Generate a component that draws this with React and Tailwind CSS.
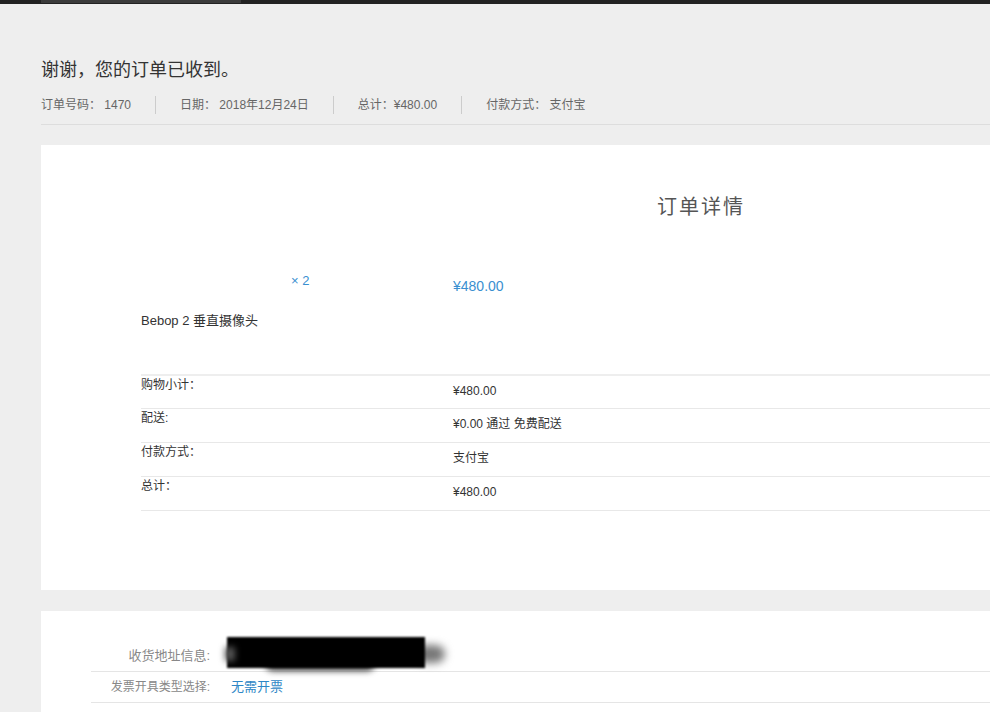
export default function App() {
  const font = { fontFamily: '"Liberation Sans", Arial, "Noto Sans CJK SC", sans-serif' };
  const rows = [
    ["购物小计：", "¥480.00"],
    ["配送:", "¥0.00 通过 免费配送"],
    ["付款方式：", "支付宝"],
    ["总计：", "¥480.00"],
  ];
  return (
    <div className="w-full h-[712px] overflow-hidden bg-[#eeeeee]" style={font}>
      <div className="h-[4px] bg-[#222222] flex">
        <div className="ml-[41px] w-[200px] h-[3px] bg-[#3b3b3b]" />
      </div>
      <div className="w-[1320px] ml-[41px]">
        <h1 className="mt-[54px] text-[18px] leading-[24px] text-[#333333] font-normal">谢谢，您的订单已收到。</h1>
        <div className="mt-[14px] flex items-center text-[12px] leading-[18px] text-[#666666] pb-[10px] border-b border-[#dddddd]">
          <span className="pr-[24px]">订单号码： 1470</span>
          <span className="px-[24px] border-l border-[#cccccc]">日期： 2018年12月24日</span>
          <span className="px-[24px] border-l border-[#cccccc]">总计：¥480.00</span>
          <span className="px-[24px] border-l border-[#cccccc]">付款方式： 支付宝</span>
        </div>

        <div className="mt-[20px] bg-white pt-[48px] pb-[79px]">
          <h2 className="text-center text-[20px] leading-[28px] tracking-[2px] text-[#555555] font-normal">订单详情</h2>
          <div className="ml-[100px] mt-[51px] flex">
            <div className="w-[312px]">
              <div className="pl-[150px] text-[13px] leading-[18px] text-[#3a8fd0]">× 2</div>
              <div className="mt-[22px] text-[13px] leading-[18px] text-[#333333]">Bebop 2 垂直摄像头</div>
            </div>
            <div className="pt-[5px] text-[14px] leading-[18px] text-[#3a8fd0]">¥480.00</div>
          </div>
          <div className="ml-[100px] mt-[44px] border-t-2 border-[#eeeeee]">
            {rows.map(([k, v], i) => (
              <div key={k} className={`flex border-b border-[#e8e8e8] text-[12px] leading-[18px] text-[#333333] ${i === 0 ? "h-[33px]" : "h-[34px]"}`}>
                <div className="w-[312px]">{k}</div>
                <div className="pt-[6px]">{v}</div>
              </div>
            ))}
          </div>
        </div>

        <div className="mt-[21px] bg-white pt-[30px] pl-[50px] h-[200px]">
          <div className="flex items-center h-[31px] border-b border-[#e5e5e5]">
            <div className="w-[120px] pr-[1px] text-right text-[13px] text-[#888888]">收货地址信息:</div>
            <div className="relative ml-[14px] w-[230px] h-[31px]">
              <div className="absolute left-[190px] top-[4px] w-[30px] h-[18px] bg-[#777777] blur-[4px] rounded-full" />
              <div className="absolute left-[40px] top-[14px] w-[110px] h-[16px] bg-[#444444] blur-[3px] rounded-full" />
              <div className="absolute left-[2px] top-[-4px] w-[198px] h-[31px] bg-black blur-[1px]" />
              <div className="absolute left-[0px] top-[6px] w-[10px] h-[14px] bg-[#555555] blur-[3px]" />
            </div>
          </div>
          <div className="flex items-center h-[31px] border-b border-[#e5e5e5]">
            <div className="w-[120px] pr-[1px] text-right text-[12px] text-[#888888]">发票开具类型选择:</div>
            <div className="ml-[20px] text-[13px] text-[#2e87c6]">无需开票</div>
          </div>
        </div>
      </div>
    </div>
  );
}
